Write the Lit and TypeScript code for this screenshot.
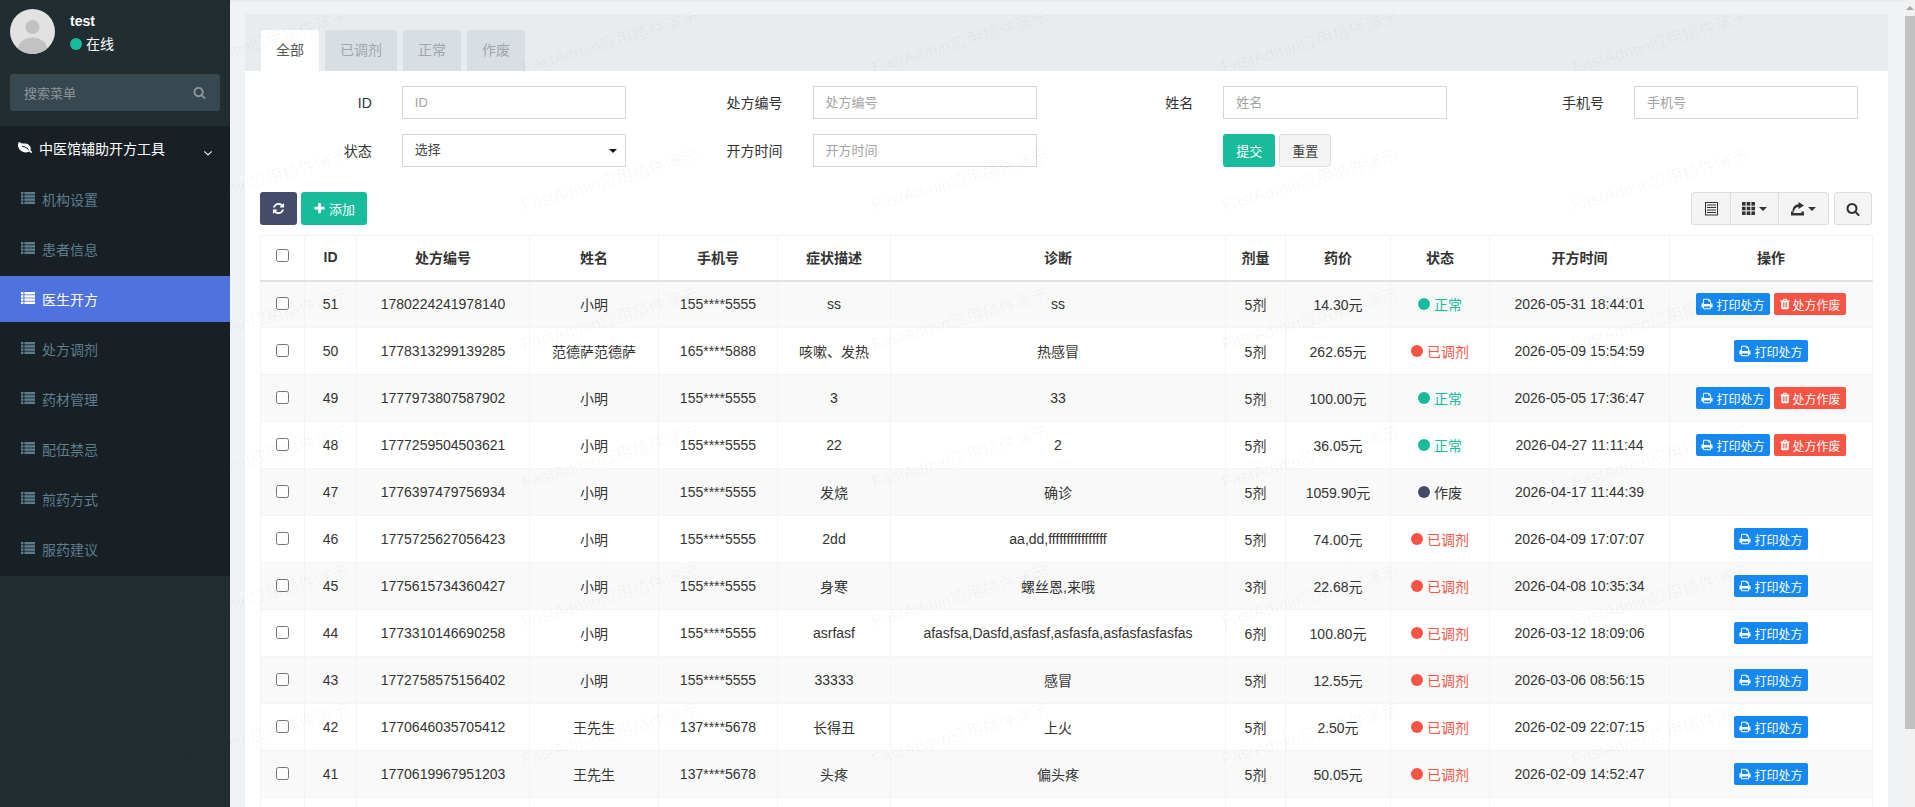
import { LitElement, html, css, svg } from "lit";
import { customElement } from "lit/decorators.js";

const P = {
  refresh: "M1639 1056q0 5-1 7-64 268-268 434.5t-478 166.5q-146 0-282.5-55t-243.5-157l-129 129q-19 19-45 19t-45-19-19-45v-448q0-26 19-45t45-19h448q26 0 45 19t19 45-19 45l-137 137q71 66 161 102t187 36q134 0 250-65t186-179q11-17 53-117 8-23 30-23h192q13 0 22.5 9.5t9.5 22.5zm25-800v448q0 26-19 45t-45 19h-448q-26 0-45-19t-19-45 19-45l138-138q-148-137-349-137-134 0-250 65t-186 179q-11 17-53 117-8 23-30 23h-199q-13 0-22.5-9.5t-9.5-22.5v-7q65-268 270-434.5t480-166.5q146 0 284 55.5t245 156.5l130-129q19-19 45-19t45 19 19 45z",
  search: "M1216 832q0-185-131.5-316.5t-316.5-131.5-316.5 131.5-131.5 316.5 131.5 316.5 316.5 131.5 316.5-131.5 131.5-316.5zm512 832q0 52-38 90t-90 38q-54 0-90-38l-343-342q-179 124-399 124-143 0-273.5-55.5t-225-150-150-225-55.5-273.5 55.5-273.5 150-225 225-150 273.5-55.5 273.5 55.5 225 150 150 225 55.5 273.5q0 220-124 399l343 343q37 37 37 90z",
  plus: "M1600 736v192q0 40-28 68t-68 28h-416v416q0 40-28 68t-68 28h-192q-40 0-68-28t-28-68v-416h-416q-40 0-68-28t-28-68v-192q0-40 28-68t68-28h416v-416q0-40 28-68t68-28h192q40 0 68 28t28 68v416h416q40 0 68 28t28 68z",
  print: "M448 1536h896v-256h-896v256zm0-640h896v-384h-160q-40 0-68-28t-28-68v-160h-640v640zm1152 64q0-26-19-45t-45-19-45 19-19 45 19 45 45 19 45-19 19-45zm128 0v416q0 13-9.5 22.5t-22.5 9.5h-224v160q0 40-28 68t-68 28h-960q-40 0-68-28t-28-68v-160h-224q-13 0-22.5-9.5t-9.5-22.5v-416q0-79 56.5-135.5t135.5-56.5h64v-544q0-40 28-68t68-28h672q40 0 88 20t76 48l152 152q28 28 48 76t20 88v256h64q79 0 135.5 56.5t56.5 135.5z",
  trash: "M704 1376v-704q0-14-9-23t-23-9h-64q-14 0-23 9t-9 23v704q0 14 9 23t23 9h64q14 0 23-9t9-23zm256 0v-704q0-14-9-23t-23-9h-64q-14 0-23 9t-9 23v704q0 14 9 23t23 9h64q14 0 23-9t9-23zm256 0v-704q0-14-9-23t-23-9h-64q-14 0-23 9t-9 23v704q0 14 9 23t23 9h64q14 0 23-9t9-23zm-544-992h448l-48-117q-7-9-17-11h-317q-10 2-17 11zm928 32v64q0 14-9 23t-23 9h-96v948q0 83-47 143.5t-113 60.5h-832q-66 0-113-58.5t-47-141.5v-952h-96q-14 0-23-9t-9-23v-64q0-14 9-23t23-9h309l70-167q15-37 54-63t79-26h320q40 0 79 26t54 63l70 167h309q14 0 23 9t9 23z",
  angle: "M1395 736q0 13-10 23l-466 466q-10 10-23 10t-23-10l-466-466q-10-10-10-23t10-23l50-50q10-10 23-10t23 10l393 393 393-393q10-10 23-10t23 10l50 50q10 10 10 23z",
  leaf: "M1280 704q0-26-19-45t-45-19q-172 0-318 49.5t-259.5 134-235.5 219.5q-19 21-19 45 0 26 19 45t45 19q24 0 45-19 27-24 74-71t67-66q137-124 268.5-176t313.5-52q26 0 45-19t19-45zm512-198q0 95-20 193-46 224-184.5 383t-357.5 268q-214 108-438 108-148 0-286-47-15-5-88-42t-96-37q-16 0-39.5 32t-45 70-52.5 70-60 32q-43 0-63.5-17.5t-45.5-59.5q-2-4-6-11t-5.5-10-3-9.5-1.5-13.5q0-35 31-73.5t68-65.5 68-56 31-48q0-4-14-38t-16-44q-9-51-9-104 0-115 43.5-220t119-184.5 170.5-139 204-95.5q55-18 145-25.5t179.5-9 178.5-6 163.5-24 113.5-56.5l29.5-29.5 29.5-28 27-20 36.5-16 43.5-4.5q39 0 70.5 46t47.5 112 24 124 8 96z",
};

const fa = (d: string, size: number, cls = "") => html`<svg class="ic ${cls}" width=${size} height=${size} viewBox="0 0 1792 1792" fill="currentColor"><path d=${d}></path></svg>`;

const listIcon = html`<svg class="ic" width="14" height="14" viewBox="0 0 14 14" fill="currentColor">
  ${[1, 4.2, 7.4, 10.6].map((y) => svg`<rect x="0" y=${y} width="2.4" height="2.4"></rect><rect x="3.4" y=${y} width="10.6" height="2.4"></rect>`)}
</svg>`;

const listAlt = html`<svg class="ic" width="13" height="14" viewBox="0 0 13 14" fill="none" stroke="currentColor">
  <rect x=".5" y=".5" width="12" height="12.5"></rect>
  <path d="M2 3h9M2 5.5h9M2 8h9M2 10.5h9" stroke-width="1.2"></path>
</svg>`;

const thIcon = html`<svg class="ic" width="13" height="13" viewBox="0 0 13 13" fill="currentColor">
  ${[0, 4.7, 9.4].flatMap((y) => [0, 4.7, 9.4].map((x) => svg`<rect x=${x} y=${y} width="3.6" height="3.6"></rect>`))}
</svg>`;

const exportIcon = html`<svg class="ic" width="13" height="14" viewBox="0 0 13 14" fill="currentColor">
  <path d="M0 9.5h2.5v1.5h8V9.5H13V13.5H0z"></path>
  <path d="M7.5 0L13 3.5 7.5 7V5C5 5 3.5 6.5 3 9.5H1.5C1.5 5 4 2.5 7.5 2.3z"></path>
</svg>`;

type Status = "ok" | "done" | "void";
type Row = [number, string, string, string, string, string, string, string, Status, string];

const ROWS: Row[] = [
  [51, "1780224241978140", "小明", "155****5555", "ss", "ss", "5剂", "14.30元", "ok", "2026-05-31 18:44:01"],
  [50, "1778313299139285", "范德萨范德萨", "165****5888", "咳嗽、发热", "热感冒", "5剂", "262.65元", "done", "2026-05-09 15:54:59"],
  [49, "1777973807587902", "小明", "155****5555", "3", "33", "5剂", "100.00元", "ok", "2026-05-05 17:36:47"],
  [48, "1777259504503621", "小明", "155****5555", "22", "2", "5剂", "36.05元", "ok", "2026-04-27 11:11:44"],
  [47, "1776397479756934", "小明", "155****5555", "发烧", "确诊", "5剂", "1059.90元", "void", "2026-04-17 11:44:39"],
  [46, "1775725627056423", "小明", "155****5555", "2dd", "aa,dd,ffffffffffffffff", "5剂", "74.00元", "done", "2026-04-09 17:07:07"],
  [45, "1775615734360427", "小明", "155****5555", "身寒", "螺丝恩,来哦", "3剂", "22.68元", "done", "2026-04-08 10:35:34"],
  [44, "1773310146690258", "小明", "155****5555", "asrfasf", "afasfsa,Dasfd,asfasf,asfasfa,asfasfasfasfas", "6剂", "100.80元", "done", "2026-03-12 18:09:06"],
  [43, "1772758575156402", "小明", "155****5555", "33333", "感冒", "5剂", "12.55元", "done", "2026-03-06 08:56:15"],
  [42, "1770646035705412", "王先生", "137****5678", "长得丑", "上火", "5剂", "2.50元", "done", "2026-02-09 22:07:15"],
  [41, "1770619967951203", "王先生", "137****5678", "头疼", "偏头疼", "5剂", "50.05元", "done", "2026-02-09 14:52:47"],
];

const STATUS = { ok: "正常", done: "已调剂", void: "作废" };
const COLS = [44, 52, 173, 129, 119, 113, 335, 60, 105, 99, 180, 203];
const HEADS = ["ID", "处方编号", "姓名", "手机号", "症状描述", "诊断", "剂量", "药价", "状态", "开方时间", "操作"];
const MENU = ["机构设置", "患者信息", "医生开方", "处方调剂", "药材管理", "配伍禁忌", "煎药方式", "服药建议"];
const TABS = ["全部", "已调剂", "正常", "作废"];

@customElement("app-root")
export class AppRoot extends LitElement {
  static styles = css`
    :host {
      display: block;
      position: relative;
      height: 807px;
      overflow: hidden;
      font-family: "Liberation Sans", "Noto Sans CJK SC", sans-serif;
      font-size: 14px;
      color: #333;
    }
    .layout { display: flex; height: 100%; }
    .ic { display: block; flex: none; }

    aside { width: 230px; flex: none; background: #222d32; }
    .user { height: 126px; padding: 9px 10px 0; box-sizing: border-box; }
    .user-top { display: flex; gap: 15px; height: 65px; }
    .avatar { width: 45px; height: 45px; display: block; }
    .user-name { color: #fff; font-weight: bold; line-height: 16px; margin-top: 4px; }
    .user-state { display: flex; align-items: center; gap: 4px; color: #fff; margin-top: 7px; line-height: 16px; }
    .user-state i { width: 12px; height: 12px; border-radius: 50%; background: #18bc9c; }
    .side-search {
      height: 37px;
      background: #374850;
      border-radius: 3px;
      display: flex;
      align-items: center;
      justify-content: space-between;
      padding: 0 14px;
      font-size: 13px;
      color: #8d9599;
    }
    .side-menu { background: #182025; height: 450px; }
    .tree-head {
      height: 46px;
      display: flex;
      align-items: center;
      padding: 0 15px 0 18px;
      color: #fff;
      gap: 7px;
    }
    .tree-head .flip { transform: scaleX(-1); margin-top: -2px; }
    .tree-head .angle { margin-left: auto; margin-top: 7px; }
    .tree-head span { margin-top: -2px; }
    .side-list { display: flex; flex-direction: column; gap: 4px; padding-top: 4px; }
    .side-item {
      height: 46px;
      display: flex;
      align-items: center;
      gap: 7px;
      padding-left: 21px;
      color: #5d7e8e;
    }
    .side-item .ic { margin-top: -2px; }
    .side-item span { margin-top: -1px; }
    .side-item.on { background: #4e73df; color: #fff; }

    main {
      flex: 1;
      min-width: 0;
      background: #eff3f6;
      padding: 14px 17px 0 15px;
      box-shadow: inset 0 3px 3px -2px rgba(0, 0, 0, 0.07);
    }
    .card { background: #fff; height: 100%; }
    .tabs {
      height: 57px;
      box-sizing: border-box;
      background: #e8ecef;
      padding: 16px 0 0 16px;
      display: flex;
      gap: 6px;
    }
    .tab {
      padding: 0 15px;
      line-height: 41px;
      background: #d8dfe4;
      color: #a0a6a9;
      border-radius: 3px 3px 0 0;
    }
    .tab.on { background: #fff; color: #555; }

    .filters {
      display: grid;
      grid-template-columns: repeat(4, 1fr);
      row-gap: 15px;
      padding-top: 15px;
      height: 121px;
      box-sizing: border-box;
      align-content: start;
    }
    .field { display: grid; grid-template-columns: 126.8px 224px; column-gap: 30px; }
    .field label { text-align: right; line-height: 35px; height: 33px; }
    .field input, .select {
      box-sizing: border-box;
      width: 224px;
      height: 33px;
      border: 1px solid #d2d6de;
      padding: 0 12px;
      font: inherit;
      font-size: 13px;
      outline: none;
      color: #444;
      background: #fff;
    }
    .field input::placeholder { color: #a3a3a3; }
    .select { display: flex; align-items: center; justify-content: space-between; padding-right: 8px; }
    .select span { margin-top: -4px; }
    .caret { width: 0; height: 0; border: 4px solid transparent; border-bottom: 0; border-top-color: currentColor; flex: none; }
    .select .caret { border-top-color: #111; margin-top: 1px; }
    .actions { display: flex; gap: 4px; padding-left: 156.8px; }
    .btn {
      box-sizing: border-box;
      height: 33px;
      display: inline-flex;
      align-items: center;
      justify-content: center;
      border-radius: 3px;
      font-size: 13px;
      border: 1px solid transparent;
    }
    .submit { width: 52px; background: #18bc9c; color: #fff; }
    .reset { width: 52px; background: #f4f4f4; border-color: #ddd; color: #444; }

    .toolbar { display: flex; align-items: center; padding: 0 16px 0 15px; height: 33px; gap: 4px; }
    .refresh { width: 37px; background: #444c69; color: #fff; }
    .add { width: 66px; background: #18bc9c; color: #fff; gap: 3px; }
    .spacer { flex: 1; }
    .group { display: flex; height: 33px; box-sizing: border-box; border: 1px solid #ddd; border-radius: 3px; background: #f4f4f4; color: #333; }
    .group div { display: flex; align-items: center; justify-content: center; gap: 4px; border-left: 1px solid #ddd; box-sizing: border-box; }
    .group div:first-child { border-left: 0; }
    .search-btn { width: 38px; margin-left: 1px; background: #f4f4f4; border: 1px solid #ddd; color: #333; }

    .wrap { padding: 10px 16px 0 15px; }
    table { border-collapse: collapse; table-layout: fixed; width: 1612px; }
    th, td { border: 1px solid #f4f4f4; text-align: center; padding: 0; box-sizing: border-box; }
    th { height: 45px; font-weight: bold; border-bottom: 2px solid #e2e2e2; padding-bottom: 2px; }
    td { height: 47px; white-space: nowrap; }
    tbody tr:nth-child(odd) td { background: #f9f9f9; }
    tbody tr:last-child td { background: #fff; }
    input[type="checkbox"] { display: block; margin: 0 auto 2px; width: 13px; height: 13px; }
    .status { display: inline-flex; align-items: center; gap: 4px; }
    .status i { width: 12px; height: 12px; border-radius: 50%; background: currentColor; }
    .status.ok { color: #18bc9c; }
    .status.done { color: #f75444; }
    .status.void { color: #333; }
    .status.void i { background: #444c69; }
    .op { display: flex; justify-content: center; gap: 4px; }
    .mini {
      height: 22px;
      display: inline-flex;
      align-items: center;
      gap: 3px;
      padding: 0 5.5px;
      border-radius: 2px;
      color: #fff;
      font-size: 12px;
    }
    .mini.print { background: #1688f1; }
    .mini.del { background: #f75444; }
    .mini .trash { margin: 0 -1px; }

    .scrollbar { width: 10px; flex: none; background: #f1f1f1; display: flex; flex-direction: column; }
    .scroll-up { height: 16px; display: flex; justify-content: center; align-items: center; }
    .scroll-up b { width: 0; height: 0; border: 4px solid transparent; border-top: 0; border-bottom-color: #a3a3a3; }
    .thumb { height: 713px; background: #c1c1c1; }

    .watermark {
      position: absolute;
      top: 58px;
      left: 175px;
      display: grid;
      grid-template-columns: repeat(5, 350px);
      grid-auto-rows: 138.4px;
      pointer-events: none;
    }
    .watermark span {
      height: 20px;
      line-height: 20px;
      font-size: 17px;
      white-space: nowrap;
      color: rgba(0, 0, 0, 0.04);
      transform: rotate(-16deg);
      transform-origin: 0 100%;
    }
  `;

  private renderRow(r: Row) {
    const [id, no, name, phone, symptom, diag, dose, price, st, time] = r;
    return html`<tr>
      <td><input type="checkbox" /></td>
      <td>${id}</td><td>${no}</td><td>${name}</td><td>${phone}</td><td>${symptom}</td><td>${diag}</td>
      <td>${dose}</td><td>${price}</td>
      <td><span class="status ${st}"><i></i>${STATUS[st]}</span></td>
      <td>${time}</td>
      <td>
        <div class="op">
          ${st !== "void" ? html`<span class="mini print">${fa(P.print, 12)}打印处方</span>` : ""}
          ${st === "ok" ? html`<span class="mini del">${fa(P.trash, 12, "trash")}处方作废</span>` : ""}
        </div>
      </td>
    </tr>`;
  }

  render() {
    return html`
      <div class="layout">
        <aside>
          <div class="user">
            <div class="user-top">
              <svg class="avatar" viewBox="0 0 45 45">
                <defs><clipPath id="av"><circle cx="22.5" cy="22.5" r="22.5"></circle></clipPath></defs>
                <circle cx="22.5" cy="22.5" r="22.5" fill="#e2e2e2"></circle>
                <circle cx="22.5" cy="18" r="7" fill="#c2c2c2"></circle>
                <ellipse cx="22.5" cy="40" rx="14.5" ry="11.5" fill="#c2c2c2" clip-path="url(#av)"></ellipse>
              </svg>
              <div>
                <div class="user-name">test</div>
                <div class="user-state"><i></i>在线</div>
              </div>
            </div>
            <div class="side-search">搜索菜单${fa(P.search, 13)}</div>
          </div>
          <div class="side-menu">
            <div class="tree-head">
              ${fa(P.leaf, 14, "flip")}<span>中医馆辅助开方工具</span>${fa(P.angle, 14, "angle")}
            </div>
            <div class="side-list">
              ${MENU.map((m, i) => html`<div class="side-item ${i === 2 ? "on" : ""}">${listIcon}<span>${m}</span></div>`)}
            </div>
          </div>
        </aside>
        <main>
          <div class="card">
            <div class="tabs">
              ${TABS.map((t, i) => html`<div class="tab ${i === 0 ? "on" : ""}">${t}</div>`)}
            </div>
            <div class="filters">
              <div class="field"><label>ID</label><input placeholder="ID" /></div>
              <div class="field"><label>处方编号</label><input placeholder="处方编号" /></div>
              <div class="field"><label>姓名</label><input placeholder="姓名" /></div>
              <div class="field"><label>手机号</label><input placeholder="手机号" /></div>
              <div class="field"><label>状态</label><div class="select"><span>选择</span><i class="caret"></i></div></div>
              <div class="field"><label>开方时间</label><input placeholder="开方时间" /></div>
              <div class="actions">
                <span class="btn submit">提交</span>
                <span class="btn reset">重置</span>
              </div>
            </div>
            <div class="toolbar">
              <span class="btn refresh">${fa(P.refresh, 13)}</span>
              <span class="btn add">${fa(P.plus, 13)}添加</span>
              <span class="spacer"></span>
              <div class="group">
                <div style="width:38px">${listAlt}</div>
                <div style="width:48px">${thIcon}<i class="caret"></i></div>
                <div style="width:50px">${exportIcon}<i class="caret"></i></div>
              </div>
              <span class="btn search-btn">${fa(P.search, 14)}</span>
            </div>
            <div class="wrap">
              <table>
                <colgroup>${COLS.map((w) => html`<col style="width:${w}px" />`)}</colgroup>
                <thead>
                  <tr>
                    <th><input type="checkbox" /></th>
                    ${HEADS.map((h) => html`<th>${h}</th>`)}
                  </tr>
                </thead>
                <tbody>
                  ${ROWS.map((r) => this.renderRow(r))}
                  <tr>${COLS.map(() => html`<td></td>`)}</tr>
                </tbody>
              </table>
            </div>
          </div>
        </main>
        <div class="scrollbar">
          <div class="scroll-up"><b></b></div>
          <div class="thumb"></div>
        </div>
      </div>
      <div class="watermark">
        ${Array.from({ length: 30 }, () => html`<span>FastAdmin应用插件演示</span>`)}
      </div>
    `;
  }
}
